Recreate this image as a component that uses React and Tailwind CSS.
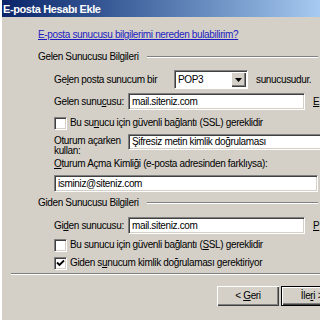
import React from "react";

const FONT = { fontFamily: '"Liberation Sans", Arial, sans-serif' };

function U({ children }) {
    return <span className="underline underline-offset-[1px]">{children}</span>;
}

function Sunken({ className = "", children }) {
    return (
        <div
            className={`bg-white border border-t-[#808080] border-l-[#808080] border-b-white border-r-white shadow-[inset_1px_1px_0_#404040,inset_-1px_-1px_0_#d4d0c8] flex items-center pl-[3px] overflow-hidden whitespace-nowrap ${className}`}
        >
            {children}
        </div>
    );
}

function Check({ checked }) {
    return (
        <div className="w-[13px] h-[13px] shrink-0 bg-white border border-t-[#808080] border-l-[#808080] border-b-white border-r-white shadow-[inset_1px_1px_0_#404040,inset_-1px_-1px_0_#d4d0c8] flex items-center justify-center">
            {checked && (
                <svg width="9" height="9" viewBox="0 0 9 9">
                    <path d="M1 3.5 L3.5 6 L8 1.5" stroke="#000" strokeWidth="1.8" fill="none" />
                </svg>
            )}
        </div>
    );
}

function Section({ title }) {
    return (
        <div className="h-[14px] flex items-center pl-[36px] whitespace-nowrap">
            <span className="shrink-0">{title}</span>
            <div className="flex-1 ml-[8px] mr-[2px] border-t border-t-[#808080] border-b border-b-white" />
        </div>
    );
}

function Button({ children, primary }) {
    return (
        <div
            className={`w-[62px] h-[20px] shrink-0 flex items-center justify-center bg-[#d4d0c8] whitespace-pre ${
                primary
                    ? "border border-black shadow-[inset_1px_1px_0_#fff,inset_-1px_-1px_0_#404040,inset_-2px_-2px_0_#808080]"
                    : "shadow-[inset_1px_1px_0_#fff,inset_-1px_-1px_0_#404040,inset_-2px_-2px_0_#808080]"
            }`}
        >
            {children}
        </div>
    );
}

export default function App() {
    return (
        <div
            className="w-[320px] h-[320px] overflow-hidden bg-[#d4d0c8] text-[10px] tracking-[-0.35px] leading-[12px] text-black border-l-2 border-l-white flex flex-col"
            style={FONT}
        >
            <div className="h-[17px] shrink-0 bg-gradient-to-r from-[#0a246a] to-[#a6caf0] flex items-center pl-[1px] text-white font-bold text-[11px] tracking-[-0.4px]">
                E-posta Hesabı Ekle
            </div>

            <div className="mt-[11px] h-[14px] flex items-center pl-[36px] whitespace-nowrap">
                <span className="text-[#1c1cc0] underline underline-offset-[1px]">
                    E-posta sunucusu bilgilerimi nereden bulabilirim?
                </span>
            </div>

            <div className="mt-[8px]">
                <Section title="Gelen Sunucusu Bilgileri" />
            </div>

            <div className="mt-[6px] h-[19px] flex items-center pl-[52px] whitespace-nowrap">
                <span className="w-[120px] shrink-0">
                    Ge<U>l</U>en posta sunucum bir
                </span>
                <div className="w-[74px] h-[19px] shrink-0 bg-white border border-t-[#808080] border-l-[#808080] border-b-white border-r-white shadow-[inset_1px_1px_0_#404040] flex items-center pl-[3px] pr-[1px]">
                    <span className="flex-1">POP3</span>
                    <div className="w-[15px] h-[15px] bg-[#d4d0c8] shadow-[inset_1px_1px_0_#fff,inset_-1px_-1px_0_#404040,inset_-2px_-2px_0_#808080] flex items-center justify-center">
                        <svg width="7" height="4" viewBox="0 0 7 4">
                            <path d="M0 0 H7 L3.5 4 Z" fill="#000" />
                        </svg>
                    </div>
                </div>
                <span className="ml-[8px]">sunucusudur.</span>
            </div>

            <div className="mt-[4px] h-[17px] flex items-center pl-[52px] whitespace-nowrap">
                <span className="w-[74px] shrink-0">
                    Gelen sunu<U>c</U>usu:
                </span>
                <Sunken className="w-[177px] h-[17px] shrink-0">mail.siteniz.com</Sunken>
                <span className="ml-[8px]">
                    <U>E</U>
                </span>
            </div>

            <div className="mt-[6px] h-[14px] flex items-center pl-[52px] gap-[3px] whitespace-nowrap">
                <Check />
                <span>
                    Bu su<U>n</U>ucu için güvenli bağlantı (SSL) gereklidir
                </span>
            </div>

            <div className="mt-[4px] h-[23px] flex items-start pl-[52px] whitespace-nowrap">
                <span className="w-[74px] shrink-0 leading-[10px] pt-[2px]">
                    Oturum açarken
                    <br />
                    kullan:
                </span>
                <Sunken className="w-[200px] h-[16px] shrink-0">
                    Şifresiz metin kimlik doğrulaması
                </Sunken>
            </div>

            <div className="h-[14px] flex items-center pl-[52px] whitespace-nowrap">
                <span>
                    <U>O</U>turum Açma Kimliği (e-posta adresinden farklıysa):
                </span>
            </div>

            <div className="mt-[4px] h-[17px] flex items-center pl-[52px] pr-[2px]">
                <Sunken className="flex-1 h-[17px]">isminiz@siteniz.com</Sunken>
            </div>

            <div className="mt-[4px]">
                <Section title="Giden Sunucusu Bilgileri" />
            </div>

            <div className="mt-[7px] h-[17px] flex items-center pl-[52px] whitespace-nowrap">
                <span className="w-[74px] shrink-0">
                    Gi<U>d</U>en sunucusu:
                </span>
                <Sunken className="w-[177px] h-[17px] shrink-0">mail.siteniz.com</Sunken>
                <span className="ml-[8px]">
                    <U>P</U>
                </span>
            </div>

            <div className="mt-[4px] h-[14px] flex items-center pl-[52px] gap-[3px] whitespace-nowrap">
                <Check />
                <span>
                    Bu sunucu için güvenli bağlantı (<U>S</U>SL) gereklidir
                </span>
            </div>

            <div className="mt-[4px] h-[14px] flex items-center pl-[52px] gap-[3px] whitespace-nowrap">
                <Check checked />
                <span>
                    Giden s<U>u</U>nucum kimlik doğrulaması gerektiriyor
                </span>
            </div>

            <div className="mt-[3px] ml-[9px] border-t border-t-[#808080] border-b border-b-white" />

            <div className="mt-[11px] flex pl-[215px] gap-[2px]">
                <Button>
                    {"< "}
                    <U>G</U>eri
                </Button>
                <Button primary>
                    İle<U>r</U>i{" >"}
                </Button>
            </div>
        </div>
    );
}
